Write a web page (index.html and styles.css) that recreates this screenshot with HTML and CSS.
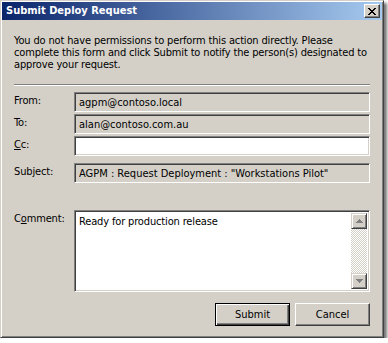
FILE: index.html
```html
<!DOCTYPE html>
<html lang="en">
<head>
  <meta charset="UTF-8">
  <title>Submit Deploy Request</title>
  <link rel="stylesheet" href="styles.css">
</head>
<body>

  <div class="window">
    <div class="titlebar">
      <span class="caption">Submit Deploy Request</span>
      <button class="close-btn" title="Close">
        <svg width="8" height="7" viewBox="0 0 8 7" shape-rendering="crispEdges">
          <path fill="#000" d="M0 0h2v1H0zM6 0h2v1H6zM1 1h2v1H1zM5 1h2v1H5zM2 2h4v1H2zM3 3h2v1H3zM2 4h4v1H2zM1 5h2v1H1zM5 5h2v1H5zM0 6h2v1H0zM6 6h2v1H6z"/>
        </svg>
      </button>
    </div>

    <div class="content">
      <p class="intro">You do not have permissions to perform this action directly. Please<br>complete this form and click Submit to notify the person(s) designated to<br>approve your request.</p>
      <div class="separator"></div>

      <div class="form">
        <label for="from">From:</label>
        <input type="text" id="from" class="field" value="agpm@contoso.local" readonly>

        <label for="to">To:</label>
        <input type="text" id="to" class="field" value="alan@contoso.com.au" readonly>

        <label for="cc"><u>C</u>c:</label>
        <input type="text" id="cc" class="field editable" value="">

        <label for="subject" class="subject-label">Subject:</label>
        <input type="text" id="subject" class="field subject" value="AGPM : Request Deployment : &quot;Workstations Pilot&quot;" readonly>

        <label class="comment-label">C<u>o</u>mment:</label>
        <div class="comment-box">
          <div class="comment-text">Ready for production release</div>
          <div class="scrollbar">
            <div class="scroll-btn">
              <svg width="7" height="4" viewBox="0 0 7 4" shape-rendering="crispEdges">
                <path fill="#808080" d="M3 0h1v1H3zM2 1h3v1H2zM1 2h5v1H1zM0 3h7v1H0z"/>
              </svg>
            </div>
            <div class="scroll-track"></div>
            <div class="scroll-btn">
              <svg width="7" height="4" viewBox="0 0 7 4" shape-rendering="crispEdges">
                <path fill="#808080" d="M0 0h7v1H0zM1 1h5v1H1zM2 2h3v1H2zM3 3h1v1H3z"/>
              </svg>
            </div>
          </div>
        </div>
      </div>

      <div class="buttons">
        <button class="default">Submit</button>
        <button>Cancel</button>
      </div>
    </div>
  </div>

</body>
</html>
```

FILE: styles.css
```css
body {
  margin: 0;
  background-color: #fff;
  font-family: "DejaVu Sans Condensed", "DejaVu Sans", sans-serif;
  font-size: 11px;
  letter-spacing: -0.15px;
  color: #000;
}
.window {
  box-sizing: border-box;
  width: 384px;
  height: 338px;
  padding: 1px;
  background-color: #d4d0c8;
  border: 1px solid;
  border-color: #d4d0c8 #404040 #404040 #d4d0c8;
  box-shadow: inset 1px 1px #fff, inset -1px -1px #808080, 3px 3px 3px rgba(0, 0, 0, 0.55);
  display: flex;
  flex-direction: column;
  overflow: hidden;
}
.titlebar {
  flex-shrink: 0;
  height: 18px;
  display: flex;
  align-items: center;
  justify-content: space-between;
  padding: 0 2px 0 4px;
  background: linear-gradient(to right, #0a246a, #a6caf0);
}
.caption {
  color: #fff;
  font-weight: bold;
  font-size: 11px;
  letter-spacing: 0;
  line-height: 18px;
}
.close-btn {
  box-sizing: border-box;
  width: 16px;
  height: 14px;
  padding: 0;
  display: flex;
  align-items: center;
  justify-content: center;
  background-color: #d4d0c8;
  border: 1px solid;
  border-color: #fff #404040 #404040 #fff;
  box-shadow: inset -1px -1px #808080;
}
.content {
  flex: 1;
  padding: 0 12px;
  display: flex;
  flex-direction: column;
}
.intro {
  margin: 15px 0 0;
  line-height: 12px;
  white-space: nowrap;
}
.separator {
  margin-top: 13px;
  border-top: 1px solid #808080;
  border-bottom: 1px solid #fff;
}
.form {
  margin-top: 6px;
  display: grid;
  grid-template-columns: 60px 1fr;
  row-gap: 2px;
  align-items: start;
}
.form label {
  padding-top: 3px;
  line-height: 12px;
}
.field {
  box-sizing: border-box;
  width: 100%;
  height: 20px;
  margin: 0;
  padding: 0 4px;
  font: inherit;
  color: #000;
  background-color: #d4d0c8;
  border: 1px solid;
  border-color: #808080 #fff #fff #808080;
  box-shadow: inset 1px 1px #404040, inset -1px -1px #d4d0c8;
  outline: none;
}
.field.editable {
  background-color: #fff;
}
.subject-label, .field.subject {
  margin-top: 5px;
}
.comment-label {
  margin-top: 25px;
}
.comment-box {
  margin-top: 25px;
  box-sizing: border-box;
  height: 82px;
  display: flex;
  background-color: #fff;
  border: 1px solid;
  border-color: #808080 #fff #fff #808080;
  box-shadow: inset 1px 1px #404040, inset -1px -1px #d4d0c8;
  padding: 2px;
}
.comment-text {
  flex: 1;
  padding: 2px 2px;
  line-height: 13px;
}
.scrollbar {
  width: 16px;
  display: flex;
  flex-direction: column;
}
.scroll-btn {
  box-sizing: border-box;
  height: 16px;
  display: flex;
  align-items: center;
  justify-content: center;
  background-color: #d4d0c8;
  border: 1px solid;
  border-color: #d4d0c8 #404040 #404040 #d4d0c8;
  box-shadow: inset 1px 1px #fff, inset -1px -1px #808080;
}
.scroll-track {
  flex: 1;
  background: repeating-conic-gradient(#d4d0c8 0 25%, #fff 0 50%) 0 0 / 2px 2px;
}
.buttons {
  margin-top: 11px;
  display: flex;
  justify-content: flex-end;
  gap: 5px;
}
.buttons button {
  box-sizing: border-box;
  width: 75px;
  height: 23px;
  padding: 0;
  font: inherit;
  color: #000;
  background-color: #d4d0c8;
  border: 1px solid;
  border-color: #fff #404040 #404040 #fff;
  box-shadow: inset -1px -1px #808080;
}
.buttons button.default {
  border-color: #000;
  box-shadow: inset 1px 1px #fff, inset -1px -1px #404040, inset -2px -2px #808080;
}
```
